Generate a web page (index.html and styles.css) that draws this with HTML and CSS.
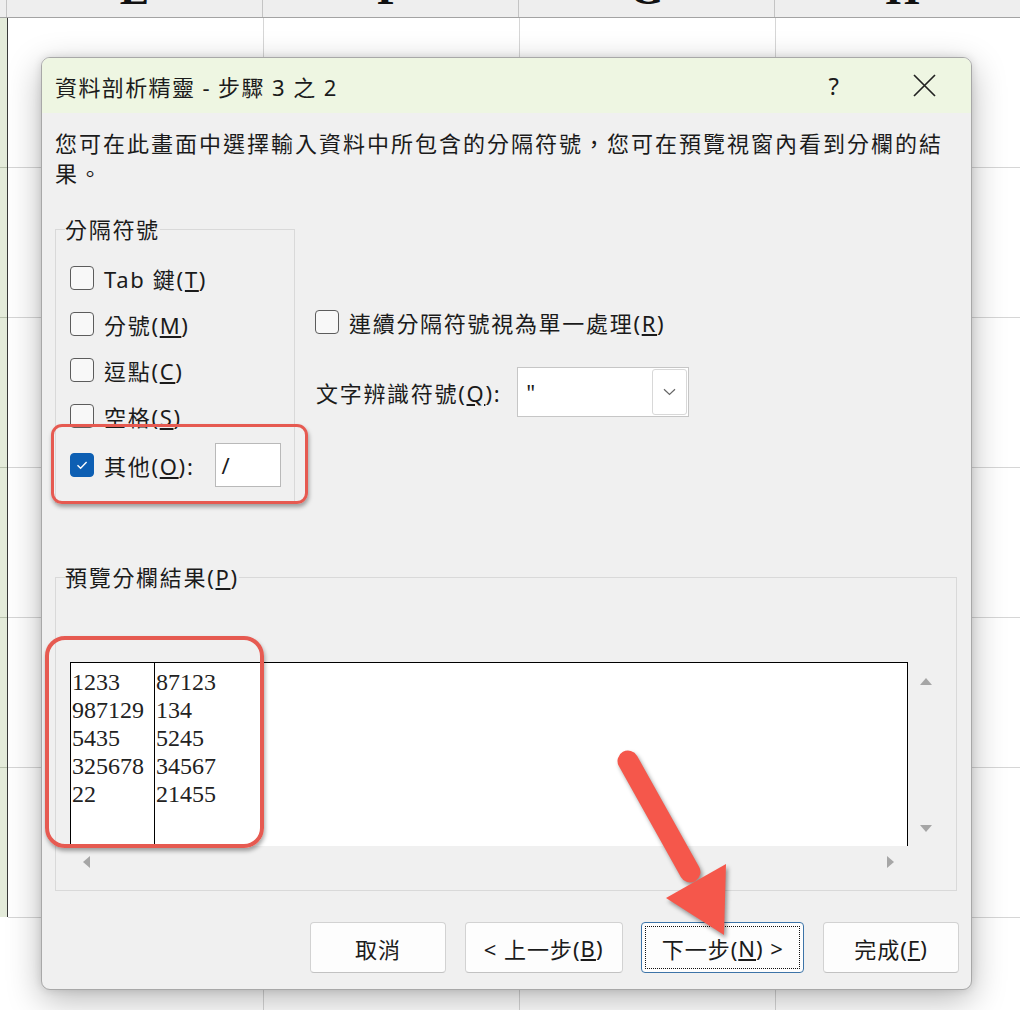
FILE: index.html
```html
<!DOCTYPE html>
<html lang="zh-Hant">
<head>
<meta charset="utf-8">
<title>資料剖析精靈</title>
<link rel="stylesheet" href="styles.css">
</head>
<body>
<div class="sheet">
  <div class="colhead">
    <div class="corner"></div>
    <div class="col"><span>E</span></div>
    <div class="col"><span>F</span></div>
    <div class="col"><span>G</span></div>
    <div class="col"><span>H</span></div>
  </div>
  <div class="grid">
    <div class="rowhead"></div>
    <div class="cells"></div>
  </div>
</div>

<div class="dialog">
  <div class="titlebar">
    <span class="title">資料剖析精靈 - 步驟 3 之 2</span>
    <span class="help">?</span>
    <svg class="close" width="23" height="23" viewBox="0 0 23 23"><path d="M1 1L22 22M22 1L1 22" stroke="#222" stroke-width="1.7" fill="none"/></svg>
  </div>
  <div class="body">
    <p class="desc">您可在此畫面中選擇輸入資料中所包含的分隔符號，您可在預覽視窗內看到分欄的結果。</p>
    <div class="options">
      <fieldset class="group delims">
        <legend>分隔符號</legend>
        <label class="check"><span class="box"></span><span>Tab 鍵(<u>T</u>)</span></label>
        <label class="check"><span class="box"></span><span>分號(<u>M</u>)</span></label>
        <label class="check"><span class="box"></span><span>逗點(<u>C</u>)</span></label>
        <label class="check"><span class="box"></span><span>空格(<u>S</u>)</span></label>
        <label class="check other"><span class="box on"><svg width="16" height="16" viewBox="0 0 16 16"><path d="M3.5 8.2L6.6 11.2L12.6 5" stroke="#fff" stroke-width="1.4" fill="none"/></svg></span><span>其他(<u>O</u>):</span><span class="field">/</span></label>
      </fieldset>
      <div class="side">
        <label class="check"><span class="box"></span><span>連續分隔符號視為單一處理(<u>R</u>)</span></label>
        <div class="qual">
          <span>文字辨識符號(<u>Q</u>):</span>
          <div class="combo">
            <span class="val">"</span>
            <span class="drop"><svg width="13" height="8" viewBox="0 0 13 8"><path d="M1 1.2L6.5 6.5L12 1.2" stroke="#666" stroke-width="1.2" fill="none"/></svg></span>
          </div>
        </div>
      </div>
    </div>
    <fieldset class="group preview">
      <legend>預覽分欄結果(<u>P</u>)</legend>
      <div class="pv">
        <div class="table">
          <div class="c1">1233<br>987129<br>5435<br>325678<br>22</div>
          <div class="c2">87123<br>134<br>5245<br>34567<br>21455</div>
        </div>
        <div class="vs"><span class="tri up"></span><span class="tri down"></span></div>
        <div class="hs"><span class="tri left"></span><span class="tri right"></span></div>
        <div class="sc"></div>
      </div>
    </fieldset>
    <div class="buttons">
      <button class="btn w1">取消</button>
      <button class="btn w2">&lt; 上一步(<u>B</u>)</button>
      <button class="btn w3 focus">下一步(<u>N</u>) &gt;</button>
      <button class="btn w1">完成(<u>F</u>)</button>
    </div>
  </div>
</div>

<div class="hl hl1"></div>
<div class="hl hl2"></div>
<svg class="arrow" width="1020" height="1010" viewBox="0 0 1020 1010">
  <g class="arrow-g">
    <line x1="628" y1="761" x2="690" y2="872" stroke="#f5574b" stroke-width="21" stroke-linecap="round"/>
    <polygon points="666,898 726,864 724,935" fill="#f5574b"/>
  </g>
</svg>
</body>
</html>
```
FILE: styles.css
```css
* { box-sizing: border-box; }
html, body { margin: 0; padding: 0; }
body {
  width: 1020px;
  height: 1010px;
  overflow: hidden;
  position: relative;
  background: #ffffff;
  font-family: "Noto Sans", "Noto Sans CJK TC", sans-serif;
  color: #1b1b1b;
}

/* background spreadsheet */
.sheet { width: 1020px; height: 1010px; display: flex; flex-direction: column; }
.colhead { height: 18px; flex: none; display: flex; background: #eeeeee; border-bottom: 1px solid #a3a3a3; }
.corner { width: 7px; flex: none; border-right: 1px solid #c4c4c4; }
.col {
  width: 256px; flex: none;
  border-right: 1px solid #c4c4c4;
  display: flex; justify-content: center; align-items: flex-end;
  overflow: hidden;
}
.col span { font: bold 44px/1 "Liberation Serif", serif; color: #111; margin-bottom: 5px; }
.grid { flex: 1; display: flex; }
.rowhead {
  width: 8px; flex: none; height: 899px;
  background-color: #e4ebda;
  background-image: repeating-linear-gradient(to bottom, transparent 0 149px, #b9c2ae 149px 150px);
  border-right: 1px solid #3a3a3a;
}
.cells {
  flex: 1;
  background-image:
    repeating-linear-gradient(to right, transparent 0 255px, #d6d6d6 255px 256px),
    repeating-linear-gradient(to bottom, transparent 0 149px, #d6d6d6 149px 150px);
}

/* dialog window */
.dialog {
  position: absolute;
  left: 41px; top: 57px;
  width: 931px;
  background: #f0f0f0;
  border: 1px solid #a8a8a8;
  border-radius: 9px;
  overflow: hidden;
  box-shadow: 0 10px 34px rgba(0,0,0,0.28), 0 0 8px rgba(0,0,0,0.12);
}
.titlebar {
  height: 55px;
  background: #eef6e2;
  display: flex; align-items: center;
  padding: 0 35px 0 13px;
  font-size: 22px;
  letter-spacing: 1.4px;
}
.help { margin-left: auto; margin-right: 74px; font-size: 24px; letter-spacing: 0; }
.close { display: block; }

.body { padding: 15px 0 16px 13px; }
.desc { margin: 0 20px 0 0; font-size: 22px; line-height: 30px; letter-spacing: 2px; }

.options { display: flex; align-items: flex-start; margin-top: 28px; }
.group { margin: 0; border: 1px solid #d9d9d9; min-width: 0; }
.group legend {
  padding: 0; margin-left: -5px;
  font-size: 22px; line-height: 26px; letter-spacing: 1.7px;
}
.delims { width: 240px; padding: 13px 0 14px 14px; }
.check {
  display: flex; align-items: center; gap: 10px;
  height: 46px;
  font-size: 22px; letter-spacing: 1.7px;
}
.box {
  width: 24px; height: 24px; flex: none;
  border: 1.5px solid #5c5c5c; border-radius: 4px;
  background: #f8f8f8;
}
.box.on {
  background: #0d5fb3; border-color: #0d5fb3;
  display: flex; align-items: center; justify-content: center;
}
.other { margin-top: 3px; }
.field {
  width: 66px; height: 44px; margin-left: 10px;
  background: #fff; border: 1px solid #b9b9b9;
  display: flex; align-items: center; padding-left: 6px;
  letter-spacing: 0;
}

.side { margin-left: 20px; margin-top: 83px; display: flex; flex-direction: column; }
.qual {
  display: flex; align-items: center; gap: 16px;
  margin-top: 22px; padding-left: 1px;
  font-size: 22px; letter-spacing: 1.7px;
}
.combo {
  width: 172px; height: 50px;
  background: #fff; border: 1px solid #c6c6c6;
  display: flex; align-items: center;
  padding: 0 1px 0 8px;
  letter-spacing: 0;
}
.val { flex: 1; font-size: 22px; }
.drop {
  width: 35px; height: 46px;
  border: 1px solid #d8d8d8; border-radius: 3px;
  background: #fff;
  display: flex; align-items: center; justify-content: center;
}

.preview { width: 902px; margin-top: 61px; padding: 72px 12px 12px 14px; }
.pv { display: grid; grid-template-columns: 838px 36px; grid-template-rows: 184px 32px; }
.table {
  display: flex;
  background: #fff;
  border: 1px solid #000; border-bottom: none;
  font: 24px/28px "Liberation Serif", serif;
  color: #222;
}
.c1 { width: 84px; border-right: 1px solid #000; padding: 5px 0 0 1px; }
.c2 { padding: 5px 0 0 1px; }
.vs { display: flex; flex-direction: column; justify-content: space-between; align-items: center; padding: 16px 0 14px; }
.hs { display: flex; justify-content: space-between; align-items: center; padding: 0 14px 0 13px; }
.tri { width: 0; height: 0; display: block; }
.tri.up { border-left: 6px solid transparent; border-right: 6px solid transparent; border-bottom: 7px solid #a6a6a6; }
.tri.down { border-left: 6px solid transparent; border-right: 6px solid transparent; border-top: 7px solid #a6a6a6; }
.tri.left { border-top: 6px solid transparent; border-bottom: 6px solid transparent; border-right: 7px solid #a6a6a6; }
.tri.right { border-top: 6px solid transparent; border-bottom: 6px solid transparent; border-left: 7px solid #a6a6a6; }

.buttons { display: flex; justify-content: flex-end; gap: 18.7px; margin-top: 31px; margin-right: 12px; }
.btn {
  height: 51px;
  background: #fdfdfd;
  border: 1px solid #d2d2d2; border-bottom-color: #c2c2c2;
  border-radius: 4px;
  font-family: inherit; font-size: 22px; letter-spacing: 1px;
  color: #1b1b1b;
  display: flex; align-items: center; justify-content: center;
  padding: 0;
}
.w1 { width: 136px; }
.w2 { width: 158px; }
.w3 { width: 163px; }
.btn.focus { border-color: #3d74a8; outline: 1px dotted #111; outline-offset: -5px; }

/* annotations */
.hl {
  position: absolute;
  border: 3px solid #e65a51;
  box-shadow: 1px 3px 4px rgba(0,0,0,0.35);
}
.hl1 { left: 51px; top: 424px; width: 257px; height: 80px; border-radius: 11px; }
.hl2 { left: 45px; top: 636px; width: 219px; height: 212px; border-radius: 20px; border-width: 4px; }
.arrow { position: absolute; left: 0; top: 0; pointer-events: none; }
.arrow-g { filter: drop-shadow(2px 3px 2px rgba(0,0,0,0.4)); }
```
